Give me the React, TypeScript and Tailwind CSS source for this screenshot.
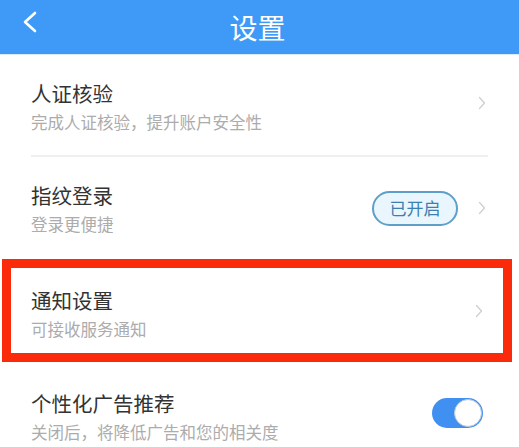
import React from "react";

const font = { fontFamily: '"Noto Sans CJK SC", "Noto Sans", sans-serif' };

function Chevron() {
  return (
    <svg width="8" height="14" viewBox="0 0 8 14" className="shrink-0">
      <polyline points="1.5,1.5 6.5,7 1.5,12.5" fill="none" stroke="#cfcfcf" strokeWidth="1.3" strokeLinecap="round" strokeLinejoin="round" />
    </svg>
  );
}

function TextBlock({ title, sub }: { title: string; sub: string }) {
  return (
    <div className="flex flex-col">
      <div className="text-[20.5px] leading-[28px] text-[#333333]">{title}</div>
      <div className="mt-[4px] text-[16.5px] leading-[22px] text-[#acacac]">{sub}</div>
    </div>
  );
}

export default function App() {
  return (
    <div className="w-[519px] h-[447px] overflow-hidden bg-white" style={font}>
      <div className="relative flex h-[55px] items-center justify-center bg-[#3e9af6] border-b border-[#d8ecfb]">
        <svg width="20" height="24" viewBox="0 0 20 24" className="absolute left-[20px] top-[10px]">
          <polyline points="15,3 5,12 15,21" fill="none" stroke="#ffffff" strokeWidth="2.6" strokeLinecap="round" strokeLinejoin="round" />
        </svg>
        <span className="ml-[-4px] text-[28px] leading-none text-white">设置</span>
      </div>

      <div className="flex flex-col">
        <div className="mx-[31px] flex items-center justify-between border-b-2 border-[#efefef] pt-[24px] pb-[22px]">
          <TextBlock title="人证核验" sub="完成人证核验，提升账户安全性" />
          <div className="mr-[2px] mb-[6px]"><Chevron /></div>
        </div>

        <div className="mx-[31px] flex items-center justify-between pt-[24px] pb-[24px]">
          <TextBlock title="指纹登录" sub="登录更便捷" />
          <div className="flex items-center gap-[20px] mr-[2px]">
            <div className="flex h-[35px] w-[86px] items-center justify-center rounded-full border-2 border-[#5e9fc9] bg-[#eaf6fd] text-[17px] text-[#3c7fb0]">
              已开启
            </div>
            <Chevron />
          </div>
        </div>

        <div className="ml-[2px] mr-[7px] flex items-center justify-between border-[9px] border-[#fa2a0a] pl-[20px] pr-[20px] pt-[18px] pb-[13px]">
          <TextBlock title="通知设置" sub="可接收服务通知" />
          <div className="mb-[4px]"><Chevron /></div>
        </div>

        <div className="mx-[31px] flex items-center justify-between pt-[27px]">
          <TextBlock title="个性化广告推荐" sub="关闭后，将降低广告和您的相关度" />
          <div className="mr-[5px] mb-[6px] flex h-[30px] w-[51px] items-center justify-end rounded-full bg-[#3f90f0] p-[1px]">
            <div className="h-[28px] w-[28px] rounded-full border border-[#b9c7d2] bg-white" />
          </div>
        </div>
      </div>
    </div>
  );
}
